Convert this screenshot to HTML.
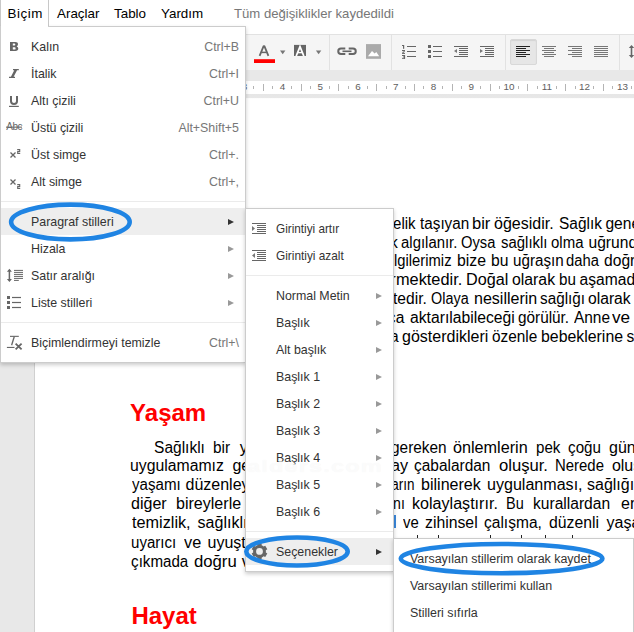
<!DOCTYPE html><html><head><meta charset="utf-8"><style>
*{box-sizing:border-box}
html,body{margin:0;padding:0}
body{width:634px;height:632px;overflow:hidden;position:relative;background:#fff;font-family:"Liberation Sans",sans-serif}
.a{position:absolute}
.mb{font-size:13.4px;color:#000;top:5.8px;line-height:15px;white-space:pre}
.sep{width:1px;height:35px;top:35px;background:#e2e2e2}
.rn{font-size:9.9px;color:#606060;line-height:10px;white-space:pre;top:82.0px;width:20px;text-align:center}
.tk{width:1px;background:#b4b4b4}
.tx{font-size:14.67px;line-height:19px;color:#000;white-space:pre}
.menu{position:absolute;background:#fff;border:1px solid rgba(0,0,0,.2);box-shadow:0 2px 4px rgba(0,0,0,.2)}
.mi{position:absolute;left:0;right:0;height:27px;font-size:12.4px;color:#333;line-height:27px;white-space:pre}
.mi .t{position:absolute;left:30px;top:1px}
.mi .k{position:absolute;right:6px;top:1px;color:#777}
.ar{position:absolute;width:0;height:0;border-top:3px solid transparent;border-bottom:3px solid transparent;border-left:6px solid #999;top:11px}
.hl{background:#eeeeee}
.ms{position:absolute;left:0;right:0;height:1px;background:#ebebeb}
.h{font-size:24px;font-weight:bold;color:#f00;white-space:pre;line-height:28px}
.ln{position:absolute;height:1px;background:#666}
</style></head><body>
<div class="a" style="left:0;top:0;width:49px;height:27px;border-left:1px solid #c8c8c8;border-right:1px solid #c8c8c8;background:#fff;z-index:5"></div>
<div class="a mb" style="left:7.6px;letter-spacing:0.55px;z-index:6">Biçim</div>
<div class="a mb" style="left:57px">Araçlar</div>
<div class="a mb" style="left:114px">Tablo</div>
<div class="a mb" style="left:161px">Yardım</div>
<div class="a mb" style="left:234px;color:#777;font-size:13.15px;top:5.8px">Tüm değişiklikler kaydedildi</div>
<div class="a" style="left:0;top:34px;width:634px;height:36px;background:#f5f5f5;border-top:1px solid #e2e2e2"></div>
<div class="a sep" style="left:329px"></div>
<div class="a sep" style="left:391px"></div>
<div class="a sep" style="left:505px"></div>
<div class="a sep" style="left:619px"></div>
<svg class="a" style="left:250px;top:40px" width="80" height="26" viewBox="0 0 80 26"><path d="M9.6 15.8 L13.6 6.2 L14.4 6.2 L18.4 15.8" fill="none" stroke="#666" stroke-width="1.8" stroke-linejoin="bevel"/><path d="M11.4 12.4 H16.6" stroke="#666" stroke-width="1.5"/><rect x="4" y="19.2" width="21" height="3.8" fill="#f00"/><path d="M30 10.6 H35.4 L32.7 14.2Z" fill="#777"/><rect x="44" y="4.9" width="12" height="11.1" fill="#666"/><path d="M46.2 16 L50 6.6 L50 6.6 L53.8 16" fill="none" stroke="#fff" stroke-width="1.8"/><path d="M47.6 12.6 H52.4" stroke="#fff" stroke-width="1.4"/><path d="M65.9 10.6 H71.3 L68.6 14.2Z" fill="#777"/></svg>
<svg class="a" style="left:0;top:0" width="634" height="70"><path d="M345.3 48.5 H341 A2.75 2.75 0 0 0 341 54 H345.3" fill="none" stroke="#666" stroke-width="2"/><path d="M348.7 48.5 H353 A2.75 2.75 0 0 1 353 54 H348.7" fill="none" stroke="#666" stroke-width="2"/><rect x="342.5" y="50.5" width="9" height="1.6" fill="#666"/><rect x="366" y="44.1" width="15" height="14.7" fill="#aaa"/><path d="M368 56.2 L372 51 L374.6 53.6 L376.3 52 L379.2 56.2Z" fill="#fff"/></svg>
<svg class="a" style="left:0;top:0" width="634" height="70"><g fill="#666"><rect x="402" y="45" width="2" height="1"/><rect x="403" y="45" width="1.2" height="3.8"/><rect x="402" y="50" width="3" height="1.1"/><path d="M404 51 L405 51.4 L403.2 52.9 L402 52.9Z"/><rect x="402" y="52.9" width="3" height="1"/><rect x="402" y="55" width="3" height="1"/><rect x="404" y="55" width="1.1" height="3.8"/><rect x="403" y="56.5" width="2" height="0.9"/><rect x="402" y="57.8" width="3" height="1"/></g></svg>
<div class="ln" style="left:407px;width:9px;top:46px;height:1.1px;background:#666"></div>
<div class="ln" style="left:407px;width:9px;top:51px;height:1.1px;background:#666"></div>
<div class="ln" style="left:407px;width:9px;top:56px;height:1.1px;background:#666"></div>
<div class="a" style="left:428px;top:45px;width:3px;height:3px;background:#666"></div>
<div class="a" style="left:428px;top:50px;width:3px;height:3px;background:#666"></div>
<div class="a" style="left:428px;top:55px;width:3px;height:3px;background:#666"></div>
<div class="ln" style="left:433px;width:9px;top:46px;height:1.1px;background:#666"></div>
<div class="ln" style="left:433px;width:9px;top:51px;height:1.1px;background:#666"></div>
<div class="ln" style="left:433px;width:9px;top:56px;height:1.1px;background:#666"></div>
<div class="ln" style="left:454px;width:14px;top:45.8px;height:1.3px;background:#666"></div>
<div class="ln" style="left:454px;width:14px;top:55.8px;height:1.3px;background:#666"></div>
<div class="ln" style="left:459px;width:9px;top:47.8px;height:1.3px;background:#666"></div>
<div class="ln" style="left:459px;width:9px;top:49.8px;height:1.3px;background:#666"></div>
<div class="ln" style="left:459px;width:9px;top:51.8px;height:1.3px;background:#666"></div>
<div class="ln" style="left:459px;width:9px;top:53.8px;height:1.3px;background:#666"></div>
<div class="a" style="left:454px;top:48.5px;width:0;height:0;border-top:2.5px solid transparent;border-bottom:2.5px solid transparent;border-right:3px solid #777"></div>
<div class="ln" style="left:480px;width:14px;top:45.8px;height:1.3px;background:#666"></div>
<div class="ln" style="left:480px;width:14px;top:55.8px;height:1.3px;background:#666"></div>
<div class="ln" style="left:485px;width:9px;top:47.8px;height:1.3px;background:#666"></div>
<div class="ln" style="left:485px;width:9px;top:49.8px;height:1.3px;background:#666"></div>
<div class="ln" style="left:485px;width:9px;top:51.8px;height:1.3px;background:#666"></div>
<div class="ln" style="left:485px;width:9px;top:53.8px;height:1.3px;background:#666"></div>
<div class="a" style="left:480px;top:48.5px;width:0;height:0;border-top:2.5px solid transparent;border-bottom:2.5px solid transparent;border-left:3px solid #777"></div>
<div class="a" style="left:510px;top:39px;width:27px;height:25.5px;border:1px solid #d8d8d8;border-radius:2px;background:#e6e6e6;box-shadow:inset 0 1px 1px rgba(0,0,0,.08)"></div>
<div class="ln" style="left:516px;width:14px;top:45.8px;height:1.3px;background:#222"></div>
<div class="ln" style="left:516px;width:14px;top:49.8px;height:1.3px;background:#222"></div>
<div class="ln" style="left:516px;width:14px;top:53.8px;height:1.3px;background:#222"></div>
<div class="ln" style="left:516px;width:10px;top:47.8px;height:1.3px;background:#222"></div>
<div class="ln" style="left:516px;width:10px;top:51.8px;height:1.3px;background:#222"></div>
<div class="ln" style="left:516px;width:10px;top:55.8px;height:1.3px;background:#222"></div>
<div class="ln" style="left:542px;width:14px;top:45.8px;height:1.3px;background:#777"></div>
<div class="ln" style="left:542px;width:14px;top:49.8px;height:1.3px;background:#777"></div>
<div class="ln" style="left:542px;width:14px;top:53.8px;height:1.3px;background:#777"></div>
<div class="ln" style="left:544px;width:10px;top:47.8px;height:1.3px;background:#777"></div>
<div class="ln" style="left:544px;width:10px;top:51.8px;height:1.3px;background:#777"></div>
<div class="ln" style="left:544px;width:10px;top:55.8px;height:1.3px;background:#777"></div>
<div class="ln" style="left:568px;width:14px;top:45.8px;height:1.3px;background:#777"></div>
<div class="ln" style="left:568px;width:14px;top:49.8px;height:1.3px;background:#777"></div>
<div class="ln" style="left:568px;width:14px;top:53.8px;height:1.3px;background:#777"></div>
<div class="ln" style="left:572px;width:10px;top:47.8px;height:1.3px;background:#777"></div>
<div class="ln" style="left:572px;width:10px;top:51.8px;height:1.3px;background:#777"></div>
<div class="ln" style="left:572px;width:10px;top:55.8px;height:1.3px;background:#777"></div>
<div class="ln" style="left:594px;width:14px;top:45.8px;height:1.3px;background:#777"></div>
<div class="ln" style="left:594px;width:14px;top:47.8px;height:1.3px;background:#777"></div>
<div class="ln" style="left:594px;width:14px;top:49.8px;height:1.3px;background:#777"></div>
<div class="ln" style="left:594px;width:14px;top:51.8px;height:1.3px;background:#777"></div>
<div class="ln" style="left:594px;width:14px;top:53.8px;height:1.3px;background:#777"></div>
<div class="ln" style="left:594px;width:14px;top:55.8px;height:1.3px;background:#777"></div>
<svg class="a" style="left:628px;top:44px" width="6" height="16"><path d="M3.5 3 V12" stroke="#666" stroke-width="1.6"/><path d="M0.8 4 L3.5 1 L6.2 4Z M0.8 11 L3.5 14 L6.2 11Z" fill="#666"/></svg>
<div class="a" style="left:0;top:70px;width:634px;height:11px;background:#e8e8e8"></div>
<div class="a" style="left:0;top:81px;width:634px;height:13px;background:#fff"></div>
<div class="a" style="left:0;top:94px;width:634px;height:538px;background:#e8e8e8"></div>
<div class="a" style="left:34px;top:98px;width:620px;height:540px;background:#fff;border-left:1px solid #d0d0d0"></div>
<div class="a" style="left:34px;top:94px;width:600px;height:5px;background:linear-gradient(#e6e6e6,rgba(255,255,255,0))"></div>
<div class="a tk" style="left:216px;top:86px;height:3px"></div>
<div class="a tk" style="left:225px;top:84px;height:7px"></div>
<div class="a tk" style="left:235px;top:86px;height:3px"></div>
<div class="a rn" style="left:234.6px">3</div>
<div class="a tk" style="left:253px;top:86px;height:3px"></div>
<div class="a tk" style="left:263px;top:84px;height:7px"></div>
<div class="a tk" style="left:272px;top:86px;height:3px"></div>
<div class="a rn" style="left:272.4px">4</div>
<div class="a tk" style="left:291px;top:86px;height:3px"></div>
<div class="a tk" style="left:301px;top:84px;height:7px"></div>
<div class="a tk" style="left:310px;top:86px;height:3px"></div>
<div class="a rn" style="left:310.2px">5</div>
<div class="a tk" style="left:329px;top:86px;height:3px"></div>
<div class="a tk" style="left:338px;top:84px;height:7px"></div>
<div class="a tk" style="left:348px;top:86px;height:3px"></div>
<div class="a rn" style="left:347.9px">6</div>
<div class="a tk" style="left:367px;top:86px;height:3px"></div>
<div class="a tk" style="left:376px;top:84px;height:7px"></div>
<div class="a tk" style="left:386px;top:86px;height:3px"></div>
<div class="a rn" style="left:385.7px">7</div>
<div class="a tk" style="left:405px;top:86px;height:3px"></div>
<div class="a tk" style="left:414px;top:84px;height:7px"></div>
<div class="a tk" style="left:423px;top:86px;height:3px"></div>
<div class="a rn" style="left:423.5px">8</div>
<div class="a tk" style="left:442px;top:86px;height:3px"></div>
<div class="a tk" style="left:452px;top:84px;height:7px"></div>
<div class="a tk" style="left:461px;top:86px;height:3px"></div>
<div class="a rn" style="left:461.3px">9</div>
<div class="a tk" style="left:480px;top:86px;height:3px"></div>
<div class="a tk" style="left:490px;top:84px;height:7px"></div>
<div class="a tk" style="left:499px;top:86px;height:3px"></div>
<div class="a rn" style="left:499.1px">10</div>
<div class="a tk" style="left:518px;top:86px;height:3px"></div>
<div class="a tk" style="left:527px;top:84px;height:7px"></div>
<div class="a tk" style="left:537px;top:86px;height:3px"></div>
<div class="a rn" style="left:536.9px">11</div>
<div class="a tk" style="left:556px;top:86px;height:3px"></div>
<div class="a tk" style="left:565px;top:84px;height:7px"></div>
<div class="a tk" style="left:575px;top:86px;height:3px"></div>
<div class="a rn" style="left:574.6px">12</div>
<div class="a tk" style="left:593px;top:86px;height:3px"></div>
<div class="a tk" style="left:603px;top:84px;height:7px"></div>
<div class="a tk" style="left:612px;top:86px;height:3px"></div>
<div class="a rn" style="left:612.4px">13</div>
<div class="a tk" style="left:631px;top:86px;height:3px"></div>
<div class="a tk" style="left:641px;top:84px;height:7px"></div>
<div class="a tk" style="left:650px;top:86px;height:3px"></div>
<div class="a rn" style="left:650.2px">14</div>
<div class="a tk" style="left:669px;top:86px;height:3px"></div>
<div class="a tk" style="left:678px;top:84px;height:7px"></div>
<div class="a tk" style="left:688px;top:86px;height:3px"></div>
<div id="txt"><div class="a" style="left:393.30px;top:213.59px;font-size:15.6px;letter-spacing:0px;line-height:19px;white-space:pre;color:#000;transform-origin:1.00px 0;transform:scaleX(0.9636)">elik</div>
<div class="a" style="left:419.80px;top:213.59px;font-size:15.6px;letter-spacing:0px;line-height:19px;white-space:pre;color:#000;transform-origin:0.00px 0;transform:scaleX(0.9796)">taşıyan</div>
<div class="a" style="left:471.60px;top:213.59px;font-size:15.6px;letter-spacing:0px;line-height:19px;white-space:pre;color:#000;transform-origin:1.00px 0;transform:scaleX(1.0625)">bir</div>
<div class="a" style="left:494.20px;top:213.59px;font-size:15.6px;letter-spacing:0px;line-height:19px;white-space:pre;color:#000;transform-origin:1.00px 0;transform:scaleX(1.0268)">öğesidir.</div>
<div class="a" style="left:558.80px;top:213.59px;font-size:15.6px;letter-spacing:0px;line-height:19px;white-space:pre;color:#000;transform-origin:1.00px 0;transform:scaleX(0.9905)">Sağlık</div>
<div class="a" style="left:605.40px;top:213.59px;font-size:15.6px;letter-spacing:0px;line-height:19px;white-space:pre;color:#000">genellikle</div>
<div class="a" style="left:400.80px;top:232.59px;font-size:15.6px;letter-spacing:0px;line-height:19px;white-space:pre;color:#000;transform-origin:1.00px 0;transform:scaleX(0.9561)">algılanır.</div>
<div class="a" style="left:461.00px;top:232.59px;font-size:15.6px;letter-spacing:0px;line-height:19px;white-space:pre;color:#000;transform-origin:1.00px 0;transform:scaleX(0.9444)">Oysa</div>
<div class="a" style="left:500.60px;top:232.59px;font-size:15.6px;letter-spacing:0px;line-height:19px;white-space:pre;color:#000;transform-origin:1.00px 0;transform:scaleX(0.9565)">sağlıklı</div>
<div class="a" style="left:550.80px;top:232.59px;font-size:15.6px;letter-spacing:0px;line-height:19px;white-space:pre;color:#000;transform-origin:1.00px 0;transform:scaleX(0.9606)">olma</div>
<div class="a" style="left:588.50px;top:232.59px;font-size:15.6px;letter-spacing:0px;line-height:19px;white-space:pre;color:#000">uğrunda</div>
<div class="a" style="right:236.32px;top:232.59px;font-size:15.6px;letter-spacing:0px;line-height:19px;white-space:pre;color:#000">olarak</div>
<div class="a" style="left:393.60px;top:251.39px;font-size:15.6px;letter-spacing:0px;line-height:19px;white-space:pre;color:#000;transform-origin:1.00px 0;transform:scaleX(0.9475)">lgilerimiz</div>
<div class="a" style="left:457.00px;top:251.39px;font-size:15.6px;letter-spacing:0px;line-height:19px;white-space:pre;color:#000;transform-origin:1.00px 0;transform:scaleX(1.0148)">bize</div>
<div class="a" style="left:491.00px;top:251.39px;font-size:15.6px;letter-spacing:0px;line-height:19px;white-space:pre;color:#000;transform-origin:1.00px 0;transform:scaleX(1.0063)">bu</div>
<div class="a" style="left:512.50px;top:251.39px;font-size:15.6px;letter-spacing:0px;line-height:19px;white-space:pre;color:#000;transform-origin:1.00px 0;transform:scaleX(0.9740)">uğraşın</div>
<div class="a" style="left:566.00px;top:251.39px;font-size:15.6px;letter-spacing:0px;line-height:19px;white-space:pre;color:#000;transform-origin:1.00px 0;transform:scaleX(0.9471)">daha</div>
<div class="a" style="left:604.10px;top:251.39px;font-size:15.6px;letter-spacing:0px;line-height:19px;white-space:pre;color:#000">doğru</div>
<div class="a" style="left:395.80px;top:270.29px;font-size:15.6px;letter-spacing:0px;line-height:19px;white-space:pre;color:#000;transform-origin:1.00px 0;transform:scaleX(1.0475)">mektedir.</div>
<div class="a" style="left:465.80px;top:270.29px;font-size:15.6px;letter-spacing:0px;line-height:19px;white-space:pre;color:#000;transform-origin:1.00px 0;transform:scaleX(1.0385)">Doğal</div>
<div class="a" style="left:512.00px;top:270.29px;font-size:15.6px;letter-spacing:0px;line-height:19px;white-space:pre;color:#000;transform-origin:1.00px 0;transform:scaleX(1.0146)">olarak</div>
<div class="a" style="left:558.60px;top:270.29px;font-size:15.6px;letter-spacing:0px;line-height:19px;white-space:pre;color:#000;transform-origin:1.00px 0;transform:scaleX(0.9750)">bu</div>
<div class="a" style="left:579.60px;top:270.29px;font-size:15.6px;letter-spacing:0px;line-height:19px;white-space:pre;color:#000">aşamada</div>
<div class="a" style="right:238.33px;top:270.29px;font-size:15.6px;letter-spacing:0px;line-height:19px;white-space:pre;color:#000">ver</div>
<div class="a" style="left:431.30px;top:289.19px;font-size:15.6px;letter-spacing:0px;line-height:19px;white-space:pre;color:#000;transform-origin:1.00px 0;transform:scaleX(0.9225)">Olaya</div>
<div class="a" style="left:474.40px;top:289.19px;font-size:15.6px;letter-spacing:0px;line-height:19px;white-space:pre;color:#000;transform-origin:1.00px 0;transform:scaleX(1.0283)">nesillerin</div>
<div class="a" style="left:540.40px;top:289.19px;font-size:15.6px;letter-spacing:0px;line-height:19px;white-space:pre;color:#000;transform-origin:1.00px 0;transform:scaleX(0.9795)">sağlığı</div>
<div class="a" style="left:588.10px;top:289.19px;font-size:15.6px;letter-spacing:0px;line-height:19px;white-space:pre;color:#000;transform-origin:1.00px 0;transform:scaleX(1.0049)">olarak</div>
<div class="a" style="right:207.17px;top:289.19px;font-size:15.6px;letter-spacing:0px;line-height:19px;white-space:pre;color:#000">gerektedir.</div>
<div class="a" style="left:409.50px;top:308.09px;font-size:15.6px;letter-spacing:0px;line-height:19px;white-space:pre;color:#000;transform-origin:1.00px 0;transform:scaleX(1.0078)">aktarılabileceği</div>
<div class="a" style="left:518.40px;top:308.09px;font-size:15.6px;letter-spacing:0px;line-height:19px;white-space:pre;color:#000;transform-origin:1.00px 0;transform:scaleX(0.9820)">görülür.</div>
<div class="a" style="left:573.70px;top:308.09px;font-size:15.6px;letter-spacing:0px;line-height:19px;white-space:pre;color:#000;transform-origin:0.00px 0;transform:scaleX(0.9889)">Anne</div>
<div class="a" style="left:611.50px;top:308.09px;font-size:15.6px;letter-spacing:0px;line-height:19px;white-space:pre;color:#000;transform-origin:0.00px 0;transform:scaleX(1.1000)">ve</div>
<div class="a" style="right:229.66px;top:308.09px;font-size:15.6px;letter-spacing:0px;line-height:19px;white-space:pre;color:#000">arca</div>
<div class="a" style="left:401.80px;top:327.09px;font-size:15.6px;letter-spacing:0px;line-height:19px;white-space:pre;color:#000;transform-origin:1.00px 0;transform:scaleX(1.0268)">gösterdikleri</div>
<div class="a" style="left:491.70px;top:327.09px;font-size:15.6px;letter-spacing:0px;line-height:19px;white-space:pre;color:#000;transform-origin:1.00px 0;transform:scaleX(0.9841)">özenle</div>
<div class="a" style="left:540.70px;top:327.09px;font-size:15.6px;letter-spacing:0px;line-height:19px;white-space:pre;color:#000;transform-origin:1.00px 0;transform:scaleX(1.0177)">bebeklerine</div>
<div class="a" style="left:626.50px;top:327.09px;font-size:15.6px;letter-spacing:0px;line-height:19px;white-space:pre;color:#000">sevgi</div>
<div class="a" style="right:235.22px;top:327.09px;font-size:15.6px;letter-spacing:0px;line-height:19px;white-space:pre;color:#000">ya</div>
<div class="a" style="left:154.10px;top:437.66px;font-size:16px;letter-spacing:0px;line-height:19px;white-space:pre;color:#000;transform-origin:1.00px 0;transform:scaleX(0.9700)">Sağlıklı</div>
<div class="a" style="left:212.50px;top:437.66px;font-size:16px;letter-spacing:0px;line-height:19px;white-space:pre;color:#000;transform-origin:1.00px 0;transform:scaleX(0.9588)">bir</div>
<div class="a" style="left:239.80px;top:437.66px;font-size:16px;letter-spacing:0px;line-height:19px;white-space:pre;color:#000">yaşam</div>
<div class="a" style="left:391.00px;top:437.66px;font-size:16px;letter-spacing:0px;line-height:19px;white-space:pre;color:#000;transform-origin:1.00px 0;transform:scaleX(0.9607)">gereken</div>
<div class="a" style="left:453.30px;top:437.66px;font-size:16px;letter-spacing:0px;line-height:19px;white-space:pre;color:#000;transform-origin:1.00px 0;transform:scaleX(1.0125)">önlemlerin</div>
<div class="a" style="left:535.50px;top:437.66px;font-size:16px;letter-spacing:0px;line-height:19px;white-space:pre;color:#000;transform-origin:1.00px 0;transform:scaleX(0.9440)">pek</div>
<div class="a" style="left:567.80px;top:437.66px;font-size:16px;letter-spacing:0px;line-height:19px;white-space:pre;color:#000;transform-origin:1.00px 0;transform:scaleX(0.9485)">çoğu</div>
<div class="a" style="left:609.00px;top:437.66px;font-size:16px;letter-spacing:0px;line-height:19px;white-space:pre;color:#000">günlük</div>
<div class="a" style="left:130.40px;top:456.16px;font-size:16px;letter-spacing:0px;line-height:19px;white-space:pre;color:#000;transform-origin:1.00px 0;transform:scaleX(0.9862)">uygulamamız</div>
<div class="a" style="left:232.40px;top:456.16px;font-size:16px;letter-spacing:0px;line-height:19px;white-space:pre;color:#000">gereken</div>
<div class="a" style="left:391.00px;top:456.16px;font-size:16px;letter-spacing:0px;line-height:19px;white-space:pre;color:#000;transform-origin:1.00px 0;transform:scaleX(1.0125)">ay</div>
<div class="a" style="left:414.30px;top:456.16px;font-size:16px;letter-spacing:0px;line-height:19px;white-space:pre;color:#000;transform-origin:1.00px 0;transform:scaleX(0.9649)">çabalardan</div>
<div class="a" style="left:498.60px;top:456.16px;font-size:16px;letter-spacing:0px;line-height:19px;white-space:pre;color:#000;transform-origin:1.00px 0;transform:scaleX(1.0400)">oluşur.</div>
<div class="a" style="left:555.10px;top:456.16px;font-size:16px;letter-spacing:0px;line-height:19px;white-space:pre;color:#000;transform-origin:1.00px 0;transform:scaleX(0.9314)">Nerede</div>
<div class="a" style="left:611.90px;top:456.16px;font-size:16px;letter-spacing:0px;line-height:19px;white-space:pre;color:#000">oluşursa</div>
<div class="a" style="left:131.50px;top:475.16px;font-size:16px;letter-spacing:0px;line-height:19px;white-space:pre;color:#000;transform-origin:0.00px 0;transform:scaleX(0.9440)">yaşamı</div>
<div class="a" style="left:185.50px;top:475.16px;font-size:16px;letter-spacing:0px;line-height:19px;white-space:pre;color:#000">düzenleyen</div>
<div class="a" style="left:391.00px;top:475.16px;font-size:16px;letter-spacing:0px;line-height:19px;white-space:pre;color:#000;transform-origin:1.00px 0;transform:scaleX(0.8423)">arın</div>
<div class="a" style="left:421.40px;top:475.16px;font-size:16px;letter-spacing:0px;line-height:19px;white-space:pre;color:#000;transform-origin:1.00px 0;transform:scaleX(1.0034)">bilinerek</div>
<div class="a" style="left:487.20px;top:475.16px;font-size:16px;letter-spacing:0px;line-height:19px;white-space:pre;color:#000;transform-origin:1.00px 0;transform:scaleX(1.0043)">uygulanması,</div>
<div class="a" style="left:587.00px;top:475.16px;font-size:16px;letter-spacing:0px;line-height:19px;white-space:pre;color:#000">sağlığı</div>
<div class="a" style="left:130.50px;top:494.16px;font-size:16px;letter-spacing:0px;line-height:19px;white-space:pre;color:#000;transform-origin:1.00px 0;transform:scaleX(1.0029)">diğer</div>
<div class="a" style="left:176.30px;top:494.16px;font-size:16px;letter-spacing:0px;line-height:19px;white-space:pre;color:#000;transform-origin:1.00px 0;transform:scaleX(1.0032)">bireylerle</div>
<div class="a" style="left:392.50px;top:494.16px;font-size:16px;letter-spacing:0px;line-height:19px;white-space:pre;color:#000;transform-origin:1.00px 0;transform:scaleX(0.8818)">nı</div>
<div class="a" style="left:412.20px;top:494.16px;font-size:16px;letter-spacing:0px;line-height:19px;white-space:pre;color:#000;transform-origin:1.00px 0;transform:scaleX(1.0060)">kolaylaştırır.</div>
<div class="a" style="left:506.40px;top:494.16px;font-size:16px;letter-spacing:0px;line-height:19px;white-space:pre;color:#000;transform-origin:1.00px 0;transform:scaleX(0.9056)">Bu</div>
<div class="a" style="left:533.30px;top:494.16px;font-size:16px;letter-spacing:0px;line-height:19px;white-space:pre;color:#000;transform-origin:1.00px 0;transform:scaleX(0.9740)">kurallardan</div>
<div class="a" style="left:621.10px;top:494.16px;font-size:16px;letter-spacing:0px;line-height:19px;white-space:pre;color:#000">en</div>
<div class="a" style="left:131.50px;top:513.16px;font-size:16px;letter-spacing:0px;line-height:19px;white-space:pre;color:#000;transform-origin:0.00px 0;transform:scaleX(1.0143)">temizlik,</div>
<div class="a" style="left:197.60px;top:513.16px;font-size:16px;letter-spacing:0px;line-height:19px;white-space:pre;color:#000">sağlıklı</div>
<div class="a" style="left:403.20px;top:513.16px;font-size:16px;letter-spacing:0px;line-height:19px;white-space:pre;color:#000;transform-origin:0.00px 0;transform:scaleX(0.9313)">ve</div>
<div class="a" style="left:425.00px;top:513.16px;font-size:16px;letter-spacing:0px;line-height:19px;white-space:pre;color:#000;transform-origin:1.00px 0;transform:scaleX(0.9863)">zihinsel</div>
<div class="a" style="left:484.40px;top:513.16px;font-size:16px;letter-spacing:0px;line-height:19px;white-space:pre;color:#000;transform-origin:1.00px 0;transform:scaleX(0.9702)">çalışma,</div>
<div class="a" style="left:548.70px;top:513.16px;font-size:16px;letter-spacing:0px;line-height:19px;white-space:pre;color:#000;transform-origin:1.00px 0;transform:scaleX(0.9857)">düzenli</div>
<div class="a" style="left:606.50px;top:513.16px;font-size:16px;letter-spacing:0px;line-height:19px;white-space:pre;color:#000">yaşam</div>
<div class="a" style="left:130.50px;top:532.66px;font-size:16px;letter-spacing:0px;line-height:19px;white-space:pre;color:#000;transform-origin:1.00px 0;transform:scaleX(0.9413)">uyarıcı</div>
<div class="a" style="left:184.10px;top:532.66px;font-size:16px;letter-spacing:0px;line-height:19px;white-space:pre;color:#000;transform-origin:0.00px 0;transform:scaleX(1.0188)">ve</div>
<div class="a" style="left:207.50px;top:532.66px;font-size:16px;letter-spacing:0px;line-height:19px;white-space:pre;color:#000">uyuştu</div>
<div class="a" style="left:130.50px;top:551.66px;font-size:16px;letter-spacing:0px;line-height:19px;white-space:pre;color:#000;transform-origin:1.00px 0;transform:scaleX(0.9467)">çıkmada</div>
<div class="a" style="left:193.50px;top:551.66px;font-size:16px;letter-spacing:0px;line-height:19px;white-space:pre;color:#000;transform-origin:1.00px 0;transform:scaleX(1.0436)">doğru</div>
<div class="a" style="left:241.80px;top:551.66px;font-size:16px;letter-spacing:0px;line-height:19px;white-space:pre;color:#000">ve</div>
<div class="a" style="left:394px;top:515px;width:1.5px;height:13px;background:#3a88dc"></div>
<div class="a" style="left:417.2px;top:534.5px;width:1.3px;height:4px;background:#222"></div>
<div class="a" style="left:437.6px;top:534.5px;width:1.3px;height:4px;background:#222"></div>
<div class="a" style="left:490.0px;top:534.5px;width:1.3px;height:4px;background:#222"></div>
<div class="a" style="left:521.1px;top:534.5px;width:1.3px;height:4px;background:#222"></div>
<div class="a" style="left:544.7px;top:534.5px;width:1.3px;height:4px;background:#222"></div>
<div class="a" style="left:572.2px;top:534.5px;width:1.3px;height:4px;background:#222"></div>
<div class="a h" style="left:130.10px;top:399.48px">Yaşam</div>
<div class="a h" style="left:131.40px;top:601.58px">Hayat</div></div>
<div class="menu" style="left:0px;top:26px;width:246px;height:337px;z-index:10"><div class="mi" style="top:6px"><svg style="position:absolute;left:-1px;top:0" width="30" height="27" viewBox="0 33 30 27"><path fill="#666" fill-rule="evenodd" d="M10 42 H15.3 Q18 42 18 44.3 Q18 45.9 16.6 46.4 Q18.3 46.9 18.3 48.6 Q18.3 51 15.4 51 H10 Z M12.8 43.5 V45.6 H14.5 Q15.3 45.6 15.3 44.5 Q15.3 43.5 14.5 43.5 Z M12.8 47.2 V49.6 H14.7 Q15.6 49.6 15.6 48.4 Q15.6 47.2 14.7 47.2 Z"/></svg><span class="t" style="left:30px">Kalın</span><span class="k" style="right:6px">Ctrl+B</span></div><div class="mi" style="top:33px"><svg style="position:absolute;left:-1px;top:0" width="30" height="27" viewBox="0 60 30 27"><path fill="#666" d="M13 69 H18.8 V70.2 H13 Z M9 76.8 H15 V78 H9 Z M14.4 70 L17.2 70 L13.5 77 L10.8 77 Z"/></svg><span class="t" style="left:30px">İtalik</span><span class="k" style="right:6px">Ctrl+I</span></div><div class="mi" style="top:60px"><svg style="position:absolute;left:-1px;top:0" width="30" height="27" viewBox="0 87 30 27"><path d="M11 96 V101.3 Q11 104 14 104 Q17 104 17 101.3 V96" fill="none" stroke="#666" stroke-width="2"/><rect x="9" y="105.8" width="9.8" height="1.2" fill="#666"/></svg><span class="t" style="left:30px">Altı çizili</span><span class="k" style="right:6px">Ctrl+U</span></div><div class="mi" style="top:87px"><svg style="position:absolute;left:-1px;top:0" width="30" height="27" viewBox="0 114 30 27"><text x="6.3" y="130" font-family="Liberation Sans" font-size="10" fill="#666" letter-spacing="-0.5">Abc</text><rect x="6" y="126.6" width="16" height="1.1" fill="#6a6a6a"/></svg><span class="t" style="left:30px">Üstü çizili</span><span class="k" style="right:6px">Alt+Shift+5</span></div><div class="mi" style="top:114px"><svg style="position:absolute;left:-1px;top:0" width="30" height="27" viewBox="0 141 30 27"><path d="M10.5 152.5 L15.5 157.5 M15.5 152.5 L10.5 157.5" stroke="#666" stroke-width="1.3"/><path d="M17.2 149.6 H19.7 V151.5 H17.7 V153.4 H20.2" fill="none" stroke="#666" stroke-width="1.1"/></svg><span class="t" style="left:30px">Üst simge</span><span class="k" style="right:6px">Ctrl+.</span></div><div class="mi" style="top:141px"><svg style="position:absolute;left:-1px;top:0" width="30" height="27" viewBox="0 168 30 27"><path d="M10.5 179.5 L15.5 184.5 M15.5 179.5 L10.5 184.5" stroke="#666" stroke-width="1.3"/><path d="M17.2 184.6 H19.7 V186.5 H17.7 V188.4 H20.2" fill="none" stroke="#666" stroke-width="1.1"/></svg><span class="t" style="left:30px">Alt simge</span><span class="k" style="right:6px">Ctrl+,</span></div><div class="ms" style="top:174px"></div><div class="mi hl" style="top:181px"><span class="t" style="left:30px">Paragraf stilleri</span><span class="ar" style="right:11px;border-left-color:#333"></span></div><div class="mi" style="top:208px"><span class="t" style="left:30px">Hizala</span><span class="ar" style="right:11px;border-left-color:#999"></span></div><div class="mi" style="top:235px"><svg style="position:absolute;left:-1px;top:0" width="30" height="27" viewBox="0 262 30 27"><path d="M9.4 270 V280.5" stroke="#666" stroke-width="1.5"/><path d="M6.9 271.8 L9.4 268.8 L11.9 271.8Z M6.9 279 L9.4 282 L11.9 279Z" fill="#666"/><rect x="14" y="269.9" width="9" height="1" fill="#666"/><rect x="14" y="271.9" width="9" height="1" fill="#666"/><rect x="14" y="273.9" width="9" height="1" fill="#666"/><rect x="14" y="275.9" width="9" height="1" fill="#666"/><rect x="14" y="277.9" width="9" height="1" fill="#666"/><rect x="14" y="279.9" width="4.8" height="1" fill="#666"/></svg><span class="t" style="left:30px">Satır aralığı</span><span class="ar" style="right:11px;border-left-color:#999"></span></div><div class="mi" style="top:262px"><svg style="position:absolute;left:-1px;top:0" width="30" height="27" viewBox="0 289 30 27"><rect x="7" y="296" width="3" height="3" fill="#666"/><rect x="12" y="296.9" width="9" height="1.2" fill="#666"/><rect x="7" y="301" width="3" height="3" fill="#666"/><rect x="12" y="301.9" width="9" height="1.2" fill="#666"/><rect x="7" y="306" width="3" height="3" fill="#666"/><rect x="12" y="306.9" width="9" height="1.2" fill="#666"/></svg><span class="t" style="left:30px">Liste stilleri</span><span class="ar" style="right:11px;border-left-color:#999"></span></div><div class="ms" style="top:295px"></div><div class="mi" style="top:302px"><svg style="position:absolute;left:-1px;top:0" width="30" height="27" viewBox="0 329 30 27"><rect x="10" y="335.8" width="8.8" height="1.1" fill="#666"/><path d="M14.3 336.5 L11.6 345.3" stroke="#666" stroke-width="1.3"/><rect x="6.9" y="346.9" width="7.6" height="1.1" fill="#666"/><path d="M15.6 343.6 L21.6 349.4 M21.6 343.6 L15.6 349.4" stroke="#666" stroke-width="1.8"/></svg><span class="t" style="left:30px">Biçimlendirmeyi temizle</span><span class="k" style="right:6px">Ctrl+\</span></div></div>
<div class="a" style="left:1px;top:22px;width:47px;height:5px;background:#fff;z-index:11"></div>
<div class="menu" style="left:245px;top:208px;width:149px;height:364px;z-index:20"><div class="mi" style="top:6px"><svg style="position:absolute;left:-1px;top:0" width="30" height="27" viewBox="245 215 30 27"><rect x="252" y="223" width="14" height="1" fill="#666"/><rect x="257" y="225" width="9" height="1" fill="#666"/><rect x="257" y="227" width="9" height="1" fill="#666"/><rect x="257" y="229" width="9" height="1" fill="#666"/><rect x="257" y="231" width="9" height="1" fill="#666"/><rect x="252" y="233" width="14" height="1" fill="#666"/><path d="M252 226 L255 228.5 L252 231Z" fill="#777"/></svg><span class="t" style="left:30px;transform-origin:0 0;transform:scaleX(0.947)">Girintiyi artır</span></div><div class="mi" style="top:33px"><svg style="position:absolute;left:-1px;top:0" width="30" height="27" viewBox="245 242 30 27"><rect x="252" y="250" width="14" height="1" fill="#666"/><rect x="257" y="252" width="9" height="1" fill="#666"/><rect x="257" y="254" width="9" height="1" fill="#666"/><rect x="257" y="256" width="9" height="1" fill="#666"/><rect x="257" y="258" width="9" height="1" fill="#666"/><rect x="252" y="260" width="14" height="1" fill="#666"/><path d="M255 253 L252 255.5 L255 258Z" fill="#777"/></svg><span class="t" style="left:30px;transform-origin:0 0;transform:scaleX(0.955)">Girintiyi azalt</span></div><div class="ms" style="top:66px"></div><div class="mi" style="top:73px"><span class="t" style="left:30px">Normal Metin</span><span class="ar" style="right:11px;border-left-color:#999"></span></div><div class="mi" style="top:100px"><span class="t" style="left:30px">Başlık</span><span class="ar" style="right:11px;border-left-color:#999"></span></div><div class="mi" style="top:127px"><span class="t" style="left:30px">Alt başlık</span><span class="ar" style="right:11px;border-left-color:#999"></span></div><div class="mi" style="top:154px"><span class="t" style="left:30px">Başlık 1</span><span class="ar" style="right:11px;border-left-color:#999"></span></div><div class="mi" style="top:181px"><span class="t" style="left:30px">Başlık 2</span><span class="ar" style="right:11px;border-left-color:#999"></span></div><div class="mi" style="top:208px"><span class="t" style="left:30px">Başlık 3</span><span class="ar" style="right:11px;border-left-color:#999"></span></div><div class="mi" style="top:235px"><span class="t" style="left:30px">Başlık 4</span><span class="ar" style="right:11px;border-left-color:#999"></span></div><div class="mi" style="top:262px"><span class="t" style="left:30px">Başlık 5</span><span class="ar" style="right:11px;border-left-color:#999"></span></div><div class="mi" style="top:289px"><span class="t" style="left:30px">Başlık 6</span><span class="ar" style="right:11px;border-left-color:#999"></span></div><div class="ms" style="top:322px"></div><div class="mi hl" style="top:329px"><svg style="position:absolute;left:-1px;top:0" width="30" height="27" viewBox="245 538 30 27"><path fill="#666" fill-rule="evenodd" d="M265.90 551.42 L265.81 552.44 L267.32 553.51 L265.24 557.12 L263.56 556.35 L262.68 556.95 L261.75 557.39 L261.58 559.23 L257.42 559.23 L257.25 557.39 L256.28 556.93 L255.44 556.35 L253.76 557.12 L251.68 553.51 L253.19 552.44 L253.10 551.38 L253.19 550.36 L251.68 549.29 L253.76 545.68 L255.44 546.45 L256.32 545.85 L257.25 545.41 L257.42 543.57 L261.58 543.57 L261.75 545.41 L262.72 545.87 L263.56 546.45 L265.24 545.68 L267.32 549.29 L265.81 550.36Z M262.9 551.4 A3.4 3.4 0 1 0 256.1 551.4 A3.4 3.4 0 1 0 262.9 551.4Z"/></svg><span class="t" style="left:30px">Seçenekler</span><span class="ar" style="right:11px;border-left-color:#333"></span></div></div>
<div class="menu" style="left:393px;top:538px;width:241px;height:120px;z-index:30"><div class="mi" style="font-size:12.45px;top:6px"><span class="t" style="left:16px">Varsayılan stillerim olarak kaydet</span></div><div class="mi" style="font-size:12.45px;top:33px"><span class="t" style="left:16px">Varsayılan stillerimi kullan</span></div><div class="mi" style="font-size:12.45px;top:60px"><span class="t" style="left:16px">Stilleri sıfırla</span></div></div>
<svg class="a" style="left:0;top:0;z-index:50" width="634" height="632"><ellipse cx="70.4" cy="222" rx="59.3" ry="17.4" fill="none" stroke="#1f84e3" stroke-width="4.6"/><ellipse cx="297" cy="551.5" rx="50.7" ry="14" fill="none" stroke="#1f84e3" stroke-width="4.6"/><ellipse cx="501.6" cy="558.6" rx="100.8" ry="14.6" fill="none" stroke="#1f84e3" stroke-width="4.6"/></svg>
<div class="a" style="left:247px;top:456.5px;font-size:17px;font-weight:bold;letter-spacing:0.8px;line-height:20px;transform-origin:0 0;transform:scaleX(1.39);color:rgba(255,255,255,0.7);text-shadow:0 0 1px rgba(0,0,0,0.05);z-index:60;white-space:pre">alders.com</div>
</body></html>
